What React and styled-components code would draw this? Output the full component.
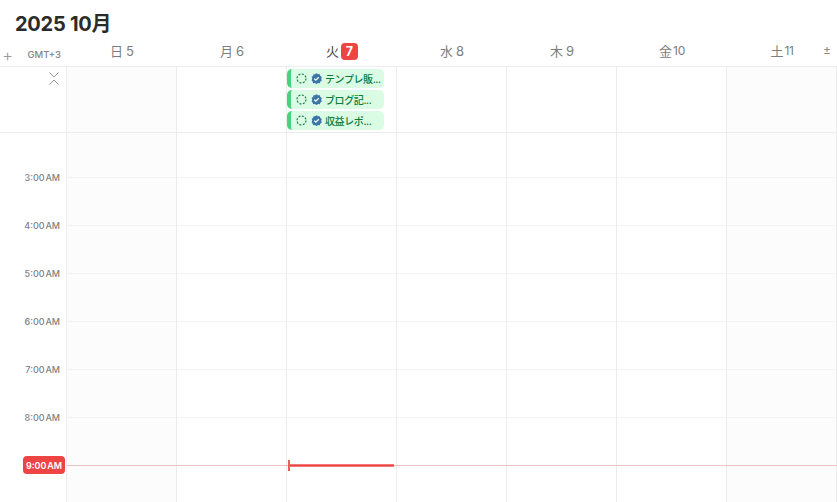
import React from "react";
import styled, { createGlobalStyle } from "styled-components";

const Global = createGlobalStyle`
  html, body { margin: 0; padding: 0; background: #fff; height: 100%; overflow: hidden; }
  body { font-family: "Inter", "Noto Sans CJK JP", sans-serif; }
`;

const Page = styled.div`
  width: 837px;
  height: 502px;
  display: flex;
  flex-direction: column;
  overflow: hidden;
  position: relative;
`;
const Title = styled.h1`
  margin: 0;
  height: 41px;
  padding: 6px 0 0 15px;
  box-sizing: border-box;
  font: 700 20px/36px "Inter", "Noto Sans CJK JP", sans-serif;
  letter-spacing: -0.25px;
  color: #2b2b2b;
`;
const HeaderRow = styled.div`
  display: grid;
  grid-template-columns: 67px repeat(7, 110px);
  height: 25px;
  border-bottom: 1px solid #ececec;
  position: relative;
`;
const HeaderGutter = styled.div`
  display: flex;
  align-items: center;
  justify-content: space-between;
  padding: 2px 6px 0 2px;
`;
const Plus = styled.span`
  font: 300 17px/14px "Inter", sans-serif;
  color: #9a9a9a;
`;
const Gmt = styled.span`
  font: 500 9.5px/12px "Inter", sans-serif;
  color: #858585;
  padding-top: 1px;
`;
const DayHead = styled.div`
  display: flex;
  align-items: center;
  justify-content: center;
  gap: ${(p) => p.$gap}px;
  padding-bottom: 5px;
  box-sizing: border-box;
  font: 400 13px/16px "Inter", "Noto Sans CJK JP", sans-serif;
  color: ${(p) => (p.$today ? "#444" : "#7d7d7d")};
`;
const DayNumber = styled.span`
  font-size: ${(p) => (p.$wide ? "12px" : "13px")};
  letter-spacing: ${(p) => (p.$wide ? "-0.3px" : "0")};
`;
const TodayBadge = styled.span`
  background: #ef4444;
  color: #fff;
  border-radius: 4px;
  width: 17px;
  height: 17px;
  display: inline-flex;
  align-items: center;
  justify-content: center;
  font: 700 12.5px/17px "Inter", sans-serif;
`;
const Expand = styled.span`
  position: absolute;
  left: 49px;
  top: 5px;
  line-height: 0;
`;
const Plusminus = styled.span`
  position: absolute;
  right: 6px;
  top: 2px;
  font: 400 12px/14px "Inter", sans-serif;
  color: #8a8a8a;
`;
const AllDayRow = styled.div`
  display: grid;
  grid-template-columns: 67px repeat(7, 110px);
  height: 65px;
  border-bottom: 1px solid #ececec;
  position: relative;
`;
const AllDayGutter = styled.div`
  border-right: 1px solid #ececec;
  position: relative;
`;
const AllDayCell = styled.div`
  border-right: 1px solid #ececec;
  background: ${(p) => (p.$weekend ? "#fcfcfc" : "#fff")};
  display: flex;
  flex-direction: column;
  gap: 2px;
  padding-top: 2px;
  box-sizing: border-box;
`;
const Event = styled.div`
  width: 97px;
  height: 19px;
  box-sizing: border-box;
  background: #dafbe4;
  border-left: 4px solid #4ad07f;
  border-radius: 5px;
  display: flex;
  align-items: center;
  padding-left: 5px;
  gap: 4px;
  svg { flex-shrink: 0; }
`;
const EventText = styled.span`
  font: 500 10px/19px "Inter", "Noto Sans CJK JP", sans-serif;
  letter-spacing: -0.4px;
  color: #0a7d3c;
  white-space: nowrap;
  margin-left: -1px;
  padding-top: 1px;
`;
const Body = styled.div`
  display: grid;
  grid-template-columns: 67px repeat(7, 110px);
  flex: 1;
  min-height: 0;
`;
const TimeGutter = styled.div`
  border-right: 1px solid #ececec;
  padding-top: 21px;
`;
const TimeLabel = styled.div`
  height: 48px;
  text-align: right;
  padding-right: 6px;
  font: 500 9px/48px "Inter", sans-serif;
  word-spacing: -1.5px;
  color: #7f7f7f;
`;
const DayColumn = styled.div`
  border-right: 1px solid #ececec;
  background: ${(p) => (p.$weekend ? "#fcfcfc" : "#fff")};
`;
const FirstSlot = styled.div`
  height: 44px;
  border-bottom: 1px solid #f3f3f3;
`;
const Slot = styled.div`
  height: 47px;
  border-bottom: 1px solid #f3f3f3;
`;
const NowLine = styled.div`
  position: absolute;
  left: 67px;
  right: 0;
  top: 465px;
  height: 1px;
  background: #e8c4c4;
`;
const NowBadge = styled.div`
  position: absolute;
  left: 23px;
  top: 456px;
  width: 42px;
  height: 18px;
  border-radius: 4px;
  background: #ef4444;
  color: #fff;
  font: 600 9px/19px "Inter", sans-serif;
  word-spacing: -1.5px;
  text-align: center;
`;
const TodayNow = styled.div`
  position: absolute;
  left: 288px;
  top: 464px;
  width: 106px;
  height: 3px;
  background: linear-gradient(#f8a5a5, #ef4444 35%, #ef4444 65%, #f8a5a5);
`;
const TodayTick = styled.div`
  position: absolute;
  left: 288px;
  top: 460px;
  width: 2px;
  height: 11px;
  background: #ef5a5a;
`;

const Ring = () => (
  <svg width="11" height="11" viewBox="0 0 11 11" fill="none">
    <circle cx="5.5" cy="5.5" r="4.5" stroke="#14793c" strokeWidth="1.1" strokeDasharray="2 1.5" />
  </svg>
);
const Check = () => (
  <svg width="11" height="11" viewBox="0 0 11 11">
    <path d="M5.5 0.3l1.5 1 1.8-.1.6 1.7 1.4 1.1-.6 1.7.6 1.7-1.4 1.1-.6 1.7-1.8-.1-1.5 1-1.5-1-1.8.1-.6-1.7L.6 7.4l.6-1.9-.6-1.7L2 2.9l.6-1.7 1.4.1z" fill="#3a76a8" />
    <path d="M3.2 5.6l1.6 1.6 3-3" fill="none" stroke="#fff" strokeWidth="1.3" />
  </svg>
);

const days = [["日", "5", 1], ["月", "6", 0], ["火", "7", 0], ["水", "8", 0], ["木", "9", 0], ["金", "10", 0], ["土", "11", 1]];
const events = ["テンプレ販...", "ブログ記...", "収益レポ..."];
const hours = ["3:00 AM", "4:00 AM", "5:00 AM", "6:00 AM", "7:00 AM", "8:00 AM"];

export default function App() {
  return (
    <Page>
      <Global />
      <Title>2025 10月</Title>
      <HeaderRow>
        <HeaderGutter><Plus>+</Plus><Gmt>GMT+3</Gmt></HeaderGutter>
        {days.map(([d, n]) => (
          <DayHead key={d} $today={n === "7"} $gap={n === "7" ? 2 : n.length > 1 ? 1 : 3}>
            {d}{n === "7" ? <TodayBadge>7</TodayBadge> : <DayNumber $wide={n.length > 1}>{n}</DayNumber>}
          </DayHead>
        ))}
        <Plusminus>±</Plusminus>
      </HeaderRow>
      <AllDayRow>
        <AllDayGutter>
          <Expand>
            <svg width="10" height="13" viewBox="0 0 10 13" fill="none" stroke="#8f8f8f" strokeWidth="0.9">
              <path d="M0.5 0.5L5 5 9.5 0.5M0.5 12.5L5 8 9.5 12.5" />
            </svg>
          </Expand>
        </AllDayGutter>
        {days.map(([d, n, w]) => (
          <AllDayCell key={d} $weekend={!!w}>
            {n === "7" && events.map((e) => (
              <Event key={e}><Ring /><Check /><EventText>{e}</EventText></Event>
            ))}
          </AllDayCell>
        ))}
      </AllDayRow>
      <Body>
        <TimeGutter>
          {hours.map((h) => <TimeLabel key={h}>{h}</TimeLabel>)}
        </TimeGutter>
        {days.map(([d, , w]) => (
          <DayColumn key={d} $weekend={!!w}>
            <FirstSlot />
            {[...Array(7)].map((_, i) => <Slot key={i} />)}
          </DayColumn>
        ))}
      </Body>
      <NowLine />
      <TodayNow />
      <TodayTick />
      <NowBadge>9:00 AM</NowBadge>
    </Page>
  );
}
